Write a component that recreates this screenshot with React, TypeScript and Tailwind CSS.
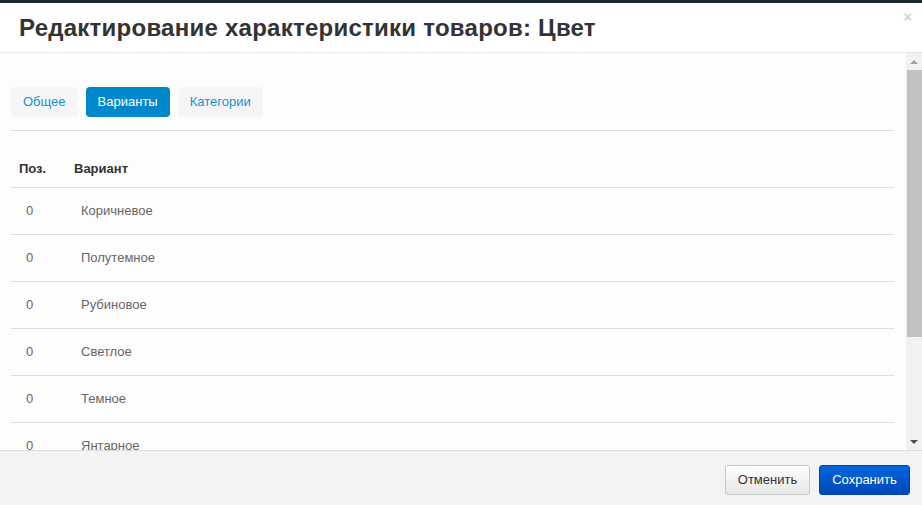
const variants = ["Коричневое", "Полутемное", "Рубиновое", "Светлое", "Темное", "Янтарное"];

export default function App() {
  return (
    <div className="w-[922px] h-[505px] flex flex-col bg-white overflow-hidden font-['Liberation_Sans',Arial,sans-serif]">
      {/* top edge of the page behind */}
      <div className="h-[3px] bg-[#1c2a30] shrink-0" />

      {/* Header */}
      <div className="relative h-[50px] shrink-0 border-b border-[#e5e5e5] flex items-center pl-[19px]">
        <h3 className="text-[24px] font-bold text-[#333] tracking-[0.25px]">
          Редактирование характеристики товаров: Цвет
        </h3>
        <span className="absolute right-[10px] top-[6px] text-[15px] font-bold text-[#d0d0d0] leading-none">×</span>
      </div>

      {/* Body */}
      <div className="flex flex-1 min-h-0 bg-[#fdfdfd]">
        <div className="flex-1 overflow-hidden pl-[11px] pr-[12px] pt-[34px]">
          <div className="flex gap-[8px] pb-[13px] border-b border-[#dddddd]">
            <button className="h-[30px] px-[12px] rounded-[4px] bg-[#f5f5f5] text-[13px] text-[#1a8fd0]">Общее</button>
            <button className="h-[30px] px-[12px] rounded-[4px] bg-[#0088cc] text-[13px] text-white">Варианты</button>
            <button className="h-[30px] px-[12px] rounded-[4px] bg-[#f5f5f5] text-[13px] text-[#1a8fd0]">Категории</button>
          </div>

          <div className="mt-[19px]">
            <div className="flex h-[38px] items-center border-b border-[#dddddd] text-[13px] font-bold text-[#333]">
              <div className="w-[63px] pl-[8px]">Поз.</div>
              <div>Вариант</div>
            </div>
            {variants.map((v) => (
              <div key={v} className="flex h-[47px] items-center border-b border-[#dddddd] text-[13px] text-[#666]">
                <div className="w-[63px] pl-[15px]">0</div>
                <div className="pl-[7px]">{v}</div>
              </div>
            ))}
          </div>
        </div>

        {/* Scrollbar */}
        <div className="w-[16px] shrink-0 bg-[#f1f1f1] flex flex-col items-center">
          <div className="h-[17px] w-full flex items-center justify-center">
            <div className="w-0 h-0 border-l-[4px] border-r-[4px] border-b-[4px] border-l-transparent border-r-transparent border-b-[#a3a3a3]" />
          </div>
          <div className="w-[15px] h-[267px] bg-[#c1c1c1]" />
          <div className="flex-1" />
          <div className="h-[17px] w-full flex items-center justify-center">
            <div className="w-0 h-0 border-l-[4px] border-r-[4px] border-t-[4px] border-l-transparent border-r-transparent border-t-[#505050]" />
          </div>
        </div>
      </div>

      {/* Footer */}
      <div className="h-[55px] shrink-0 bg-[#f3f3f3] border-t border-[#dddddd] flex items-start justify-end gap-[9px] pr-[12px] pt-[14px]">
        <button className="h-[30px] w-[85px] rounded-[3px] border border-[#c8c8c8] bg-gradient-to-b from-white to-[#e6e6e6] text-[13px] text-[#333]">
          Отменить
        </button>
        <button className="h-[30px] w-[91px] rounded-[3px] border border-[#0044aa] bg-gradient-to-b from-[#0066dd] to-[#0047b8] text-[13px] text-white">
          Сохранить
        </button>
      </div>
    </div>
  );
}
